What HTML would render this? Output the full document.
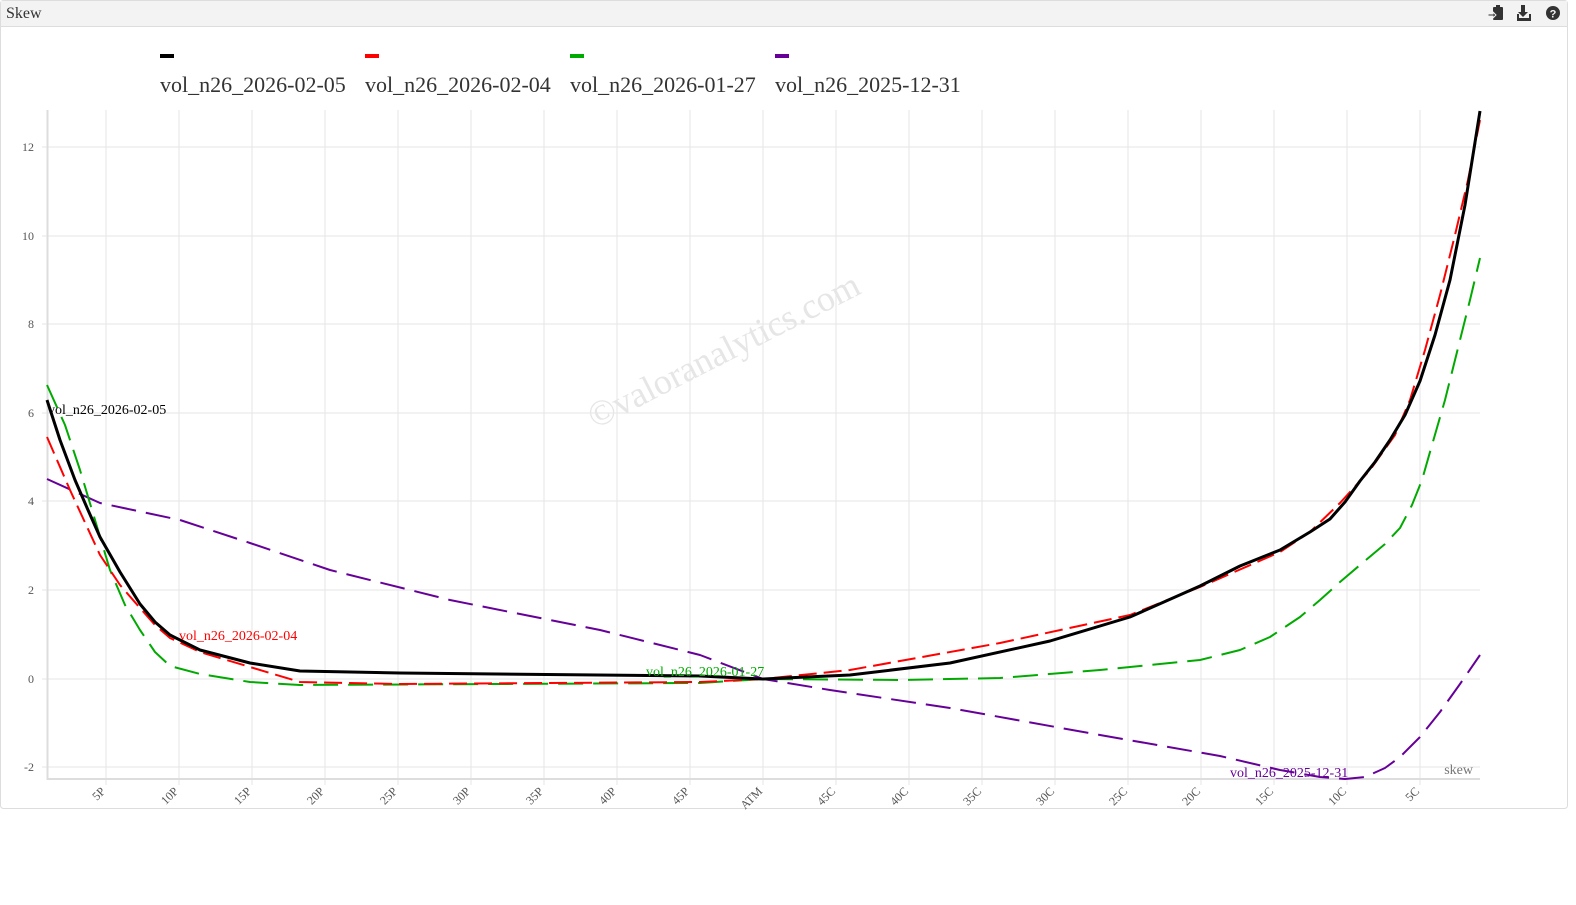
<!DOCTYPE html>
<html><head><meta charset="utf-8"><style>
html,body{margin:0;padding:0;background:#fff;width:1576px;height:905px;overflow:hidden;font-family:"Liberation Serif",serif}
</style></head><body>
<svg width="1576" height="905" xmlns="http://www.w3.org/2000/svg" style="position:absolute;left:0;top:0" font-family="Liberation Serif, serif">
<rect x="0.5" y="0.5" width="1567" height="808" rx="3" fill="#fff" stroke="#ddd"/>
<rect x="1" y="1" width="1566" height="25" fill="#f3f3f3"/>
<line x1="1" y1="26.5" x2="1567" y2="26.5" stroke="#ddd"/>
<text x="6" y="18" font-size="16" fill="#333">Skew</text>
<!-- icons -->
<g fill="#333">
<rect x="1493" y="7" width="10" height="13" rx="1"/><rect x="1496" y="5" width="4" height="3" fill="#333"/>
<path d="M1488 14h5v-2l3 3-3 3v-2h-5z" fill="#333" stroke="#f3f3f3" stroke-width="1"/>
<path d="M1521 5h4v7h3l-5 5-5-5h3z"/><rect x="1517" y="18" width="14" height="3"/><rect x="1517" y="14" width="2" height="5"/><rect x="1529" y="14" width="2" height="5"/>
<circle cx="1553" cy="13" r="7"/>
<text x="1553" y="17.5" font-size="11" font-family="Liberation Sans" font-weight="bold" fill="#f3f3f3" text-anchor="middle">?</text>
</g>
<!-- legend -->
<rect x="160" y="54" width="14" height="4" fill="#000"/>
<rect x="365" y="54" width="14" height="4" fill="#f00"/>
<rect x="570" y="54" width="14" height="4" fill="#0a0"/>
<rect x="775" y="54" width="14" height="4" fill="#609"/>
<g font-size="22" fill="#333">
<text x="160" y="92">vol_n26_2026-02-05</text>
<text x="365" y="92">vol_n26_2026-02-04</text>
<text x="570" y="92">vol_n26_2026-01-27</text>
<text x="775" y="92">vol_n26_2025-12-31</text>
</g>
<!-- grid -->
<g stroke="#e6e6e6" stroke-width="1">
<line x1="106" y1="110" x2="106" y2="785"/><line x1="179" y1="110" x2="179" y2="785"/><line x1="252" y1="110" x2="252" y2="785"/><line x1="325" y1="110" x2="325" y2="785"/><line x1="398" y1="110" x2="398" y2="785"/><line x1="471" y1="110" x2="471" y2="785"/><line x1="544" y1="110" x2="544" y2="785"/><line x1="617" y1="110" x2="617" y2="785"/><line x1="690" y1="110" x2="690" y2="785"/><line x1="763" y1="110" x2="763" y2="785"/><line x1="836" y1="110" x2="836" y2="785"/><line x1="909" y1="110" x2="909" y2="785"/><line x1="982" y1="110" x2="982" y2="785"/><line x1="1055" y1="110" x2="1055" y2="785"/><line x1="1128" y1="110" x2="1128" y2="785"/><line x1="1201" y1="110" x2="1201" y2="785"/><line x1="1274" y1="110" x2="1274" y2="785"/><line x1="1347" y1="110" x2="1347" y2="785"/><line x1="1420" y1="110" x2="1420" y2="785"/>
<line x1="42" y1="147" x2="1480" y2="147"/><line x1="42" y1="236" x2="1480" y2="236"/><line x1="42" y1="324" x2="1480" y2="324"/><line x1="42" y1="413" x2="1480" y2="413"/><line x1="42" y1="501" x2="1480" y2="501"/><line x1="42" y1="590" x2="1480" y2="590"/><line x1="42" y1="679" x2="1480" y2="679"/><line x1="42" y1="767" x2="1480" y2="767"/>
</g>
<line x1="47.5" y1="110" x2="47.5" y2="780" stroke="#ddd" stroke-width="2"/>
<line x1="47" y1="779" x2="1480" y2="779" stroke="#ddd" stroke-width="2"/>
<g font-size="12" fill="#555" text-anchor="end">
<text x="34" y="151">12</text><text x="34" y="240">10</text><text x="34" y="328">8</text><text x="34" y="417">6</text><text x="34" y="505">4</text><text x="34" y="594">2</text><text x="34" y="683">0</text><text x="34" y="771">-2</text>
</g>
<g font-size="12" fill="#555" text-anchor="end">
<text transform="translate(106,792) rotate(-45)">5P</text>
<text transform="translate(179,792) rotate(-45)">10P</text>
<text transform="translate(252,792) rotate(-45)">15P</text>
<text transform="translate(325,792) rotate(-45)">20P</text>
<text transform="translate(398,792) rotate(-45)">25P</text>
<text transform="translate(471,792) rotate(-45)">30P</text>
<text transform="translate(544,792) rotate(-45)">35P</text>
<text transform="translate(617,792) rotate(-45)">40P</text>
<text transform="translate(690,792) rotate(-45)">45P</text>
<text transform="translate(763,792) rotate(-45)">ATM</text>
<text transform="translate(836,792) rotate(-45)">45C</text>
<text transform="translate(909,792) rotate(-45)">40C</text>
<text transform="translate(982,792) rotate(-45)">35C</text>
<text transform="translate(1055,792) rotate(-45)">30C</text>
<text transform="translate(1128,792) rotate(-45)">25C</text>
<text transform="translate(1201,792) rotate(-45)">20C</text>
<text transform="translate(1274,792) rotate(-45)">15C</text>
<text transform="translate(1347,792) rotate(-45)">10C</text>
<text transform="translate(1420,792) rotate(-45)">5C</text>
</g>
<text x="1473" y="774" font-size="14" fill="#777" text-anchor="end">skew</text>
<text transform="translate(729,361) rotate(-27)" font-size="36" fill="#e6e6e6" text-anchor="middle">©valoranalytics.com</text>
<!-- curves -->
<g fill="none" stroke-linejoin="round" stroke-linecap="butt">
<polyline stroke="#609" stroke-width="2" stroke-dasharray="25,10" points="47,479 100,503 180,520 250,543 330,570 450,600 600,630 700,655 763,679 830,690 950,708 1100,735 1220,756 1280,770 1320,777 1345,779 1365,777 1385,768 1400,757 1420,737 1440,712 1460,684 1480,655"/>
<polyline stroke="#0a0" stroke-width="2" stroke-dasharray="25,10" points="47,385 65,425 80,470 95,520 110,570 125,605 140,630 155,652 170,666 200,674 250,682 300,685 500,684 700,683 763,679 900,680 1000,678 1100,670 1200,660 1240,650 1270,637 1300,617 1320,600 1340,582 1360,565 1385,544 1400,528 1412,505 1422,480 1432,445 1445,400 1460,340 1470,300 1480,258"/>
<polyline stroke="#f00" stroke-width="2" stroke-dasharray="18,7" points="47,437 70,490 100,555 120,585 140,608 155,625 170,638 200,652 250,667 300,682 400,684 700,682 763,679 850,670 1000,643 1130,615 1200,587 1280,552 1310,532 1340,503 1370,470 1395,435 1410,400 1425,350 1440,295 1455,235 1468,180 1480,120"/>
<polyline stroke="#000" stroke-width="3" points="47,400 60,440 75,480 88,510 100,537 120,572 140,604 155,622 170,635 200,650 250,663 300,671 400,673 700,676 763,679 850,675 950,663 1050,641 1130,617 1200,586 1240,566 1280,550 1310,532 1330,519 1345,502 1360,481 1375,462 1390,440 1405,415 1420,381 1435,335 1450,280 1465,205 1480,111"/>
</g>
<text x="48" y="414" font-size="14" fill="#000">vol_n26_2026-02-05</text>
<text x="179" y="640" font-size="14" fill="#f00">vol_n26_2026-02-04</text>
<text x="646" y="676" font-size="14" fill="#0a0">vol_n26_2026-01-27</text>
<text x="1230" y="777" font-size="14" fill="#609">vol_n26_2025-12-31</text>
</svg>
</body></html>
